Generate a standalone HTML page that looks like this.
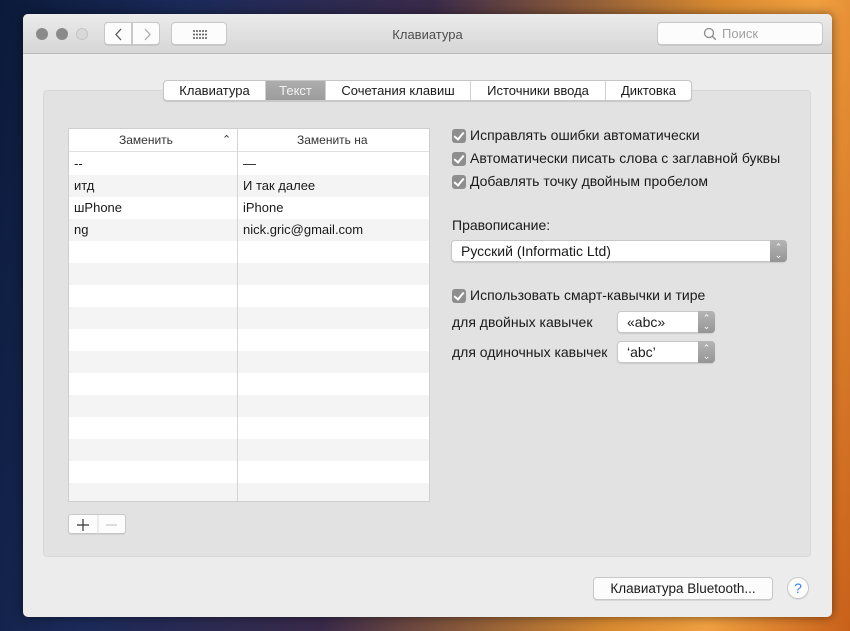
<!DOCTYPE html>
<html><head><meta charset="utf-8"><style>
*{box-sizing:border-box;margin:0;padding:0}
body{width:850px;height:631px;overflow:hidden;position:relative;font-family:"Liberation Sans","DejaVu Sans",sans-serif;font-size:13px;color:#1a1a1a;
background:linear-gradient(100deg,#0b1a3a 0%,#1b2a5a 20%,#3a2a4a 45%,#8a5a3a 60%,#d98a30 75%,#f0a040 85%,#c8601a 100%);}
.win{position:absolute;left:23px;top:14px;width:809px;height:603px;background:#ececec;border-radius:5px;overflow:hidden;box-shadow:0 0 10px rgba(0,0,0,.5)}
.tb{position:absolute;left:0;top:0;width:100%;height:40px;background:linear-gradient(#ebebeb,#d6d6d6);border-bottom:1px solid #b8b8b8}
.dot{position:absolute;top:14px;width:12px;height:12px;border-radius:50%}
.btn{position:absolute;background:#fcfcfc;border:1px solid #c8c8c8;border-radius:4px;box-shadow:0 1px 0 rgba(0,0,0,.08)}
.title{position:absolute;left:0;width:100%;top:13px;text-align:center;font-size:13px;color:#4d4d4d}
.grp{position:absolute;left:20px;top:76px;width:768px;height:467px;background:#e2e2e2;border:1px solid #d8d8d8;border-radius:4px}
.tabs{position:absolute;left:140px;top:66px;height:21px;display:flex;background:#fff;border:1px solid #c6c6c6;border-radius:4px;box-shadow:0 1px 1px rgba(0,0,0,.12);font-size:13px}
.tabs div{padding:2px 0;text-align:center;border-left:1px solid #d0d0d0;line-height:16px}
.tabs div:first-child{border-left:none}
.tabs .sel{background:linear-gradient(#adadad,#9c9c9c);color:#f2f2f2}
.tbl{position:absolute;left:45px;top:114px;width:362px;height:374px;background:#fff;border:1px solid #cfcfcf;overflow:hidden}
.row{position:absolute;left:0;width:100%;height:22px;line-height:22px}
.row span{position:absolute;left:5px}
.row span+span{left:174px}
.g{background:#f4f4f4}
.vline{position:absolute;left:168px;top:0;width:1px;height:100%;background:#d5d5d5}
.cb{position:absolute;width:14px;height:14px;background:#8e8e8e;border-radius:3px}
.cb:after{content:"";position:absolute;left:4px;top:1px;width:4px;height:8px;border:solid #fff;border-width:0 2px 2px 0;transform:rotate(40deg)}
.lbl{position:absolute;font-size:14px}
.pop{position:absolute;background:#fff;border:1px solid #c8c8c8;border-radius:4px;box-shadow:0 1px 1px rgba(0,0,0,.1);height:22px;line-height:20px;padding-left:9px;font-size:14px}
.arr{position:absolute;right:-1px;top:-1px;width:17px;height:22px;background:linear-gradient(#b5b5b5,#959595);border-radius:0 4px 4px 0;color:#fff;font-size:9px;line-height:8px;text-align:center;padding-top:3px}
</style></head><body>
<div class="win">
 <div class="tb">
  <div class="dot" style="left:13px;background:#8a8a8a"></div>
  <div class="dot" style="left:33px;background:#8a8a8a"></div>
  <div class="dot" style="left:53px;background:#d9d9d9;border:1px solid #c4c4c4"></div>
  <div class="btn" style="left:81px;top:8px;width:28px;height:23px;border-radius:4px 0 0 4px"><svg width="28" height="23"><path d="M16 6l-5 5.5 5 5.5" stroke="#555" stroke-width="1.3" fill="none"/></svg></div>
  <div class="btn" style="left:109px;top:8px;width:28px;height:23px;border-radius:0 4px 4px 0"><svg width="28" height="23"><path d="M12 6l5 5.5-5 5.5" stroke="#aaa" stroke-width="1.3" fill="none"/></svg></div>
  <div class="btn" style="left:148px;top:8px;width:56px;height:23px"><svg width="56" height="23"><g fill="#555"><circle cx="22" cy="8" r="1"/><circle cx="25" cy="8" r="1"/><circle cx="28" cy="8" r="1"/><circle cx="31" cy="8" r="1"/><circle cx="34" cy="8" r="1"/><circle cx="22" cy="11.5" r="1"/><circle cx="25" cy="11.5" r="1"/><circle cx="28" cy="11.5" r="1"/><circle cx="31" cy="11.5" r="1"/><circle cx="34" cy="11.5" r="1"/><circle cx="22" cy="15" r="1"/><circle cx="25" cy="15" r="1"/><circle cx="28" cy="15" r="1"/><circle cx="31" cy="15" r="1"/><circle cx="34" cy="15" r="1"/></g></svg></div>
  <div class="title">Клавиатура</div>
  <div class="btn" style="left:634px;top:8px;width:166px;height:23px;color:#a0a0a0;font-size:13px;line-height:21px;padding-left:64px"><svg width="14" height="14" style="position:absolute;left:45px;top:4px"><circle cx="6" cy="6" r="4.5" stroke="#8a8a8a" stroke-width="1.3" fill="none"/><path d="M9.3 9.3l3.5 3.5" stroke="#8a8a8a" stroke-width="1.4"/></svg>Поиск</div>
 </div>
 <div class="grp"></div>
 <div class="tabs">
  <div style="width:101px">Клавиатура</div>
  <div class="sel" style="width:60px">Текст</div>
  <div style="width:145px">Сочетания клавиш</div>
  <div style="width:135px">Источники ввода</div>
  <div style="width:86px">Диктовка</div>
 </div>
 <div class="tbl">
  <div class="row" style="top:0;height:23px;border-bottom:1px solid #e0e0e0;font-size:12px;color:#333;line-height:22px"><span style="left:50px">Заменить</span><span style="left:153px;font-size:11px">⌃</span><span style="left:228px">Заменить на</span></div>
  <div class="row" style="top:24px"><span>--</span><span>—</span></div>
  <div class="row g" style="top:46px"><span>итд</span><span>И так далее</span></div>
  <div class="row" style="top:68px"><span>шPhone</span><span>iPhone</span></div>
  <div class="row g" style="top:90px"><span>ng</span><span>nick.gric@gmail.com</span></div>
  <div class="row g" style="top:134px"></div>
  <div class="row g" style="top:178px"></div>
  <div class="row g" style="top:222px"></div>
  <div class="row g" style="top:266px"></div>
  <div class="row g" style="top:310px"></div>
  <div class="row g" style="top:354px"></div>
  <div class="vline"></div>
 </div>
 <div class="btn" style="left:45px;top:500px;width:58px;height:20px;border-radius:3px">
  <svg width="58" height="20"><path d="M14 4v12M8 10h12" stroke="#333" stroke-width="1.2"/><path d="M29 0v20" stroke="#ddd"/><path d="M37 10h11" stroke="#bbb" stroke-width="1"/></svg>
 </div>
 <div class="cb" style="left:429px;top:115px"></div><div class="lbl" style="left:447px;top:113px">Исправлять ошибки автоматически</div>
 <div class="cb" style="left:429px;top:138px"></div><div class="lbl" style="left:447px;top:136px">Автоматически писать слова с заглавной буквы</div>
 <div class="cb" style="left:429px;top:161px"></div><div class="lbl" style="left:447px;top:159px">Добавлять точку двойным пробелом</div>
 <div class="lbl" style="left:429px;top:203px">Правописание:</div>
 <div class="pop" style="left:428px;top:226px;width:336px">Русский (Informatic Ltd)<div class="arr">⌃<br>⌄</div></div>
 <div class="cb" style="left:429px;top:275px"></div><div class="lbl" style="left:447px;top:273px">Использовать смарт-кавычки и тире</div>
 <div class="lbl" style="left:429px;top:300px">для двойных кавычек</div>
 <div class="pop" style="left:594px;top:297px;width:98px">«abc»<div class="arr">⌃<br>⌄</div></div>
 <div class="lbl" style="left:429px;top:330px">для одиночных кавычек</div>
 <div class="pop" style="left:594px;top:327px;width:98px">‘abc’<div class="arr">⌃<br>⌄</div></div>
 <div class="btn" style="left:570px;top:563px;width:180px;height:23px;text-align:center;line-height:21px;font-size:13.5px">Клавиатура Bluetooth...</div>
 <div class="btn" style="left:764px;top:563px;width:22px;height:22px;border-radius:50%;text-align:center;line-height:20px;color:#3b82f6;font-size:14px">?</div>
</div>
</body></html>
